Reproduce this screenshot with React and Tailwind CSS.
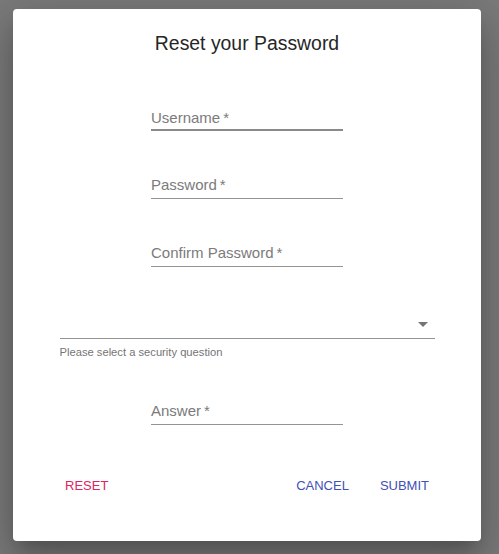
const fields = [
  { id: 'username', label: 'Username', mt: 'mt-[54px]', line: 'border-b-2 border-[#8a8a8a] pb-[2px]' },
  { id: 'password', label: 'Password', mt: 'mt-[45px]', line: 'border-b border-[#949494] pb-[4px]' },
  { id: 'confirm', label: 'Confirm Password', mt: 'mt-[45px]', line: 'border-b border-[#949494] pb-[4px]' },
];

export default function App() {
  return (
    <div className="w-full h-[554px] bg-[#7a7a7a] pt-[9px] pl-[13px] font-['Liberation_Sans',Arial,sans-serif] overflow-hidden">
      <div className="w-[468px] h-[532px] bg-white rounded-[4px] flex flex-col shadow-[0px_11px_15px_-7px_rgba(0,0,0,0.2),0px_24px_38px_3px_rgba(0,0,0,0.14),0px_9px_46px_8px_rgba(0,0,0,0.12)]">
        {/* Title */}
        <h2 className="mt-[22px] h-[24px] leading-[24px] text-[19.4px] text-center text-[#262626]">
          Reset your Password
        </h2>

        {fields.map((f) => (
          <TextField key={f.id} label={f.label} mt={f.mt} line={f.line} />
        ))}

        {/* Security question select */}
        <div className="mt-[45px] w-[375px] mx-auto">
          <div className="h-[27px] border-b border-[#949494] flex justify-end pb-[3px]">
            <svg className="w-6 h-6 text-[#757575]" viewBox="0 0 24 24" fill="currentColor">
              <path d="M7 10l5 5 5-5z" />
            </svg>
          </div>
          <p className="mt-[6px] leading-[14px] text-[11.2px] text-[#757575]">Please select a security question</p>
        </div>

        <TextField label="Answer" mt="mt-[43px]" line="border-b border-[#949494] pb-[4px]" />

        {/* Actions */}
        <div className="mt-[43px] px-[37px] flex items-center">
          <button className="h-[36px] px-[15px] text-[13px] text-[#e0245e] uppercase">Reset</button>
          <div className="flex-1" />
          <button className="h-[36px] px-[15px] mr-[1px] text-[13px] text-[#3f51b5] uppercase">Cancel</button>
          <button className="h-[36px] px-[15px] text-[13px] text-[#3f51b5] uppercase">Submit</button>
        </div>
      </div>
    </div>
  );
}

function TextField({ label, mt, line }) {
  return (
    <div className={`${mt} w-[192px] mx-auto ${line}`}>
      <label className="block leading-[18px] text-[15px] text-[#7b7b7b]">
        {label}
        <span>{'\u2009*'}</span>
      </label>
    </div>
  );
}
